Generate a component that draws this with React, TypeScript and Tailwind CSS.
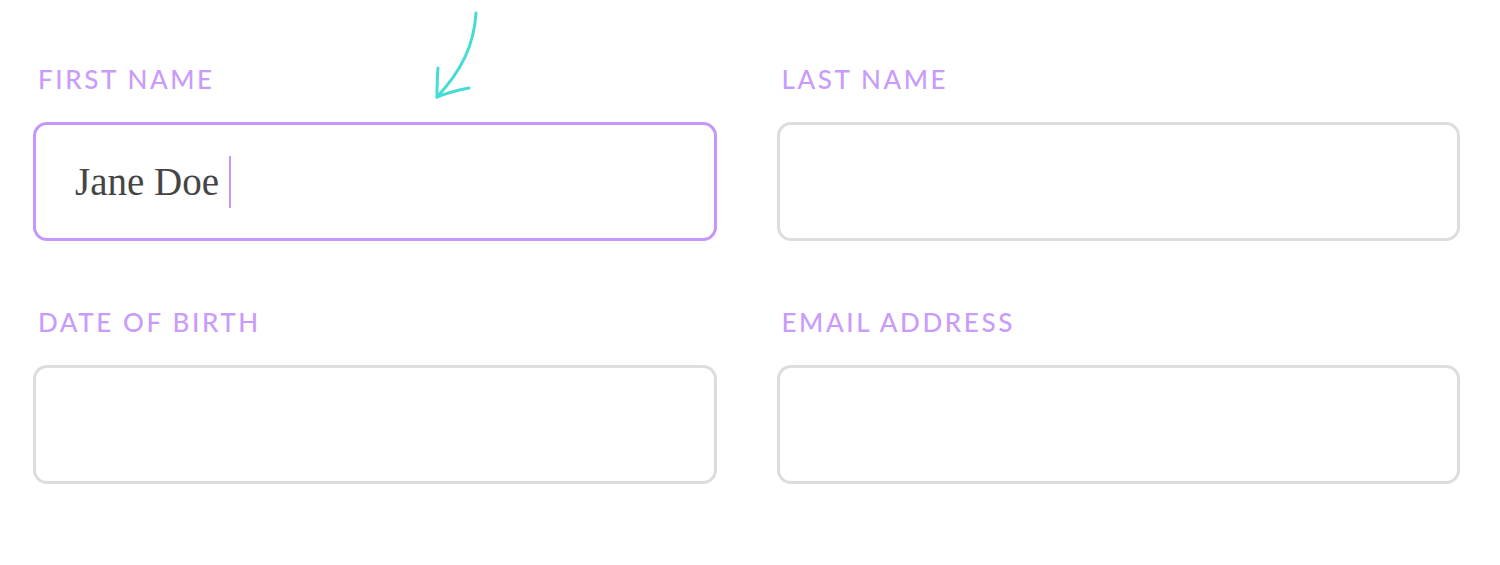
import React from 'react'

const labelClass =
  "block pl-[5px] text-[26px] leading-none tracking-[0.1em] text-[#c99bfa] font-medium font-['Lato',sans-serif]"

function Field({ label, value, focused }: { label: string; value?: string; focused?: boolean }) {
  return (
    <div>
      <label className={labelClass}>{label}</label>
      <div
        className={`mt-[30px] flex h-[119px] items-center rounded-[14px] border-[3px] bg-white pl-[39px] ${
          focused ? 'border-[#c796fa]' : 'border-[#dddddd]'
        }`}
      >
        {value && (
          <span className="text-[39px] leading-none text-[#454545] font-['Liberation_Serif',serif]">{value}</span>
        )}
        {focused && <span className="ml-[10px] h-[52px] w-[2px] bg-[#c796fa]" />}
      </div>
    </div>
  )
}

export default function App() {
  return (
    <div className="relative h-[565px] w-[1500px] bg-white">
      {/* hand-drawn arrow pointing at the focused field */}
      <svg
        className="absolute left-[420px] top-0"
        width="80"
        height="110"
        viewBox="420 0 80 110"
        fill="none"
        stroke="#45dcd6"
        strokeWidth="3"
        strokeLinecap="round"
        strokeLinejoin="round"
      >
        <path d="M476 13 C 474 45, 462 70, 437 97" />
        <path d="M438 68 C 437 80, 437 90, 437 97 C 447 93, 458 90, 469 88" />
      </svg>

      <div className="grid grid-cols-2 gap-x-[60px] gap-y-[68px] pl-[33px] pr-[40px] pt-[66px]">
        <Field label="FIRST NAME" value="Jane Doe" focused />
        <Field label="LAST NAME" />
        <Field label="DATE OF BIRTH" />
        <Field label="EMAIL ADDRESS" />
      </div>
    </div>
  )
}
